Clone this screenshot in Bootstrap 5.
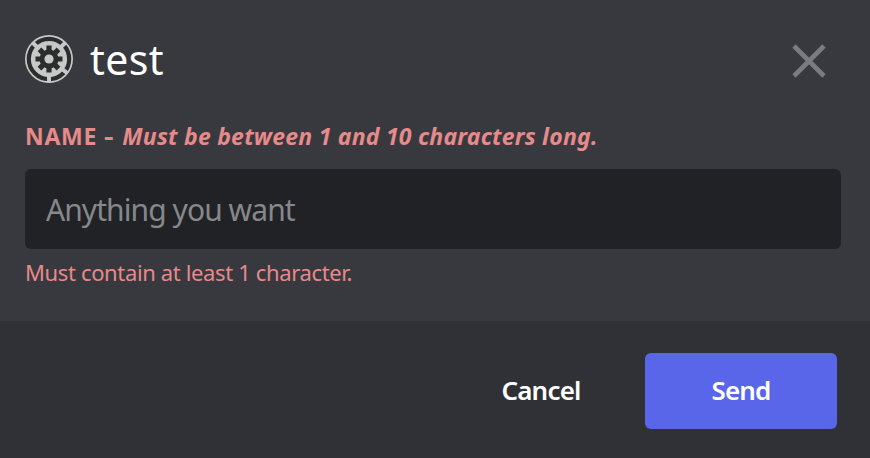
<!DOCTYPE html>
<html lang="en" data-bs-theme="dark">
<head>
<meta charset="utf-8">
<meta name="viewport" content="width=device-width, initial-scale=1">
<title>test</title>
<link href="https://cdn.jsdelivr.net/npm/bootstrap@5.3.0/dist/css/bootstrap.min.css" rel="stylesheet">
<style>
body { font-family: "Noto Sans", "Open Sans", sans-serif; background: #38393f; }
.dialog-main { height: 321px; padding: 35px 29px 0 25px; background: #38393f; }
.dialog-head { height: 48px; padding-right: 15px; }
.dialog-title { font-size: 41px; line-height: 48px; margin-left: 17px; letter-spacing: .4px; }
.name-label { font-size: 23px; line-height: 30px; margin-top: 38px; color: #e68a8a; font-weight: 700; white-space: nowrap; }
.label-name { letter-spacing: .7px; }
.label-dash { display: inline-block; transform: scaleX(1.3); margin: 0 4px 0 2px; }
.label-rule { letter-spacing: .24px; }
.name-field { height: 80px; margin-top: 18px; padding: 0 20px 0 21px; border: 0; border-radius: 6px; background: #212226 !important; font-size: 30px; letter-spacing: -.93px; }
.name-field::placeholder { color: #87888c; opacity: 1; }
.field-error { font-size: 22px; line-height: 30px; margin-top: 8px; color: #e68a8a; white-space: nowrap; letter-spacing: -.36px; }
.dialog-foot { height: 137px; padding: 32px 33px 0 0; background: #303136; }
.dialog-btn { height: 76px; border: 0; border-radius: 6px; font-size: 26px; font-weight: 600; color: #fff; padding: 0 0 1px; letter-spacing: -.8px; }
.cancel-btn { width: 80px; margin-right: 64px; }
.send-btn { width: 192px; background: #5966ea; }
</style>
<script src="https://cdn.jsdelivr.net/npm/bootstrap@5.3.0/dist/js/bootstrap.bundle.min.js"></script>
</head>
<body class="overflow-hidden">
<form class="d-flex flex-column">
<div class="dialog-main">
<header class="dialog-head d-flex align-items-center">
<svg width="48" height="48" viewBox="-24 -24 48 48" aria-hidden="true">
<circle r="24" fill="#c8c8c8"/><circle r="20.2" fill="none" stroke="#2c2d2d" stroke-width="4.2"/>
<g stroke="#c8c8c8" stroke-width="4"><path d="M0 16V23.5M-11-11-16.5-16.5M11-11 16.5-16.5M13 10 18.6 14.3"/></g>
<g fill="#2c2d2d"><circle r="9.5"/>
<g id="teeth"><path d="M-2.6-13.5h5.2v27h-5.2zM-13.5-2.6v5.2h27v-5.2z"/></g><use href="#teeth" transform="rotate(45)"/></g>
<circle r="4.6" fill="#c8c8c8"/>
</svg>
<h1 class="dialog-title fw-normal text-white mb-0">test</h1>
<button type="button" class="btn p-0 border-0 ms-auto d-flex mt-1" aria-label="Close">
<svg width="34" height="34" viewBox="0 0 34 34"><path d="M2 2 32 32M32 2 2 32" stroke="#7b7c80" stroke-width="4.6"/></svg>
</button>
</header>
<label for="name" class="name-label d-block"><span class="label-name">NAME</span> <span class="label-dash">-</span> <em class="label-rule">Must be between 1 and 10 characters long.</em></label>
<input id="name" class="form-control name-field" placeholder="Anything you want">
<div class="field-error">Must contain at least 1 character.</div>
</div>
<footer class="dialog-foot d-flex justify-content-end">
<button type="button" class="btn dialog-btn cancel-btn">Cancel</button>
<button type="submit" class="btn dialog-btn send-btn">Send</button>
</footer>
</form>
</body>
</html>
